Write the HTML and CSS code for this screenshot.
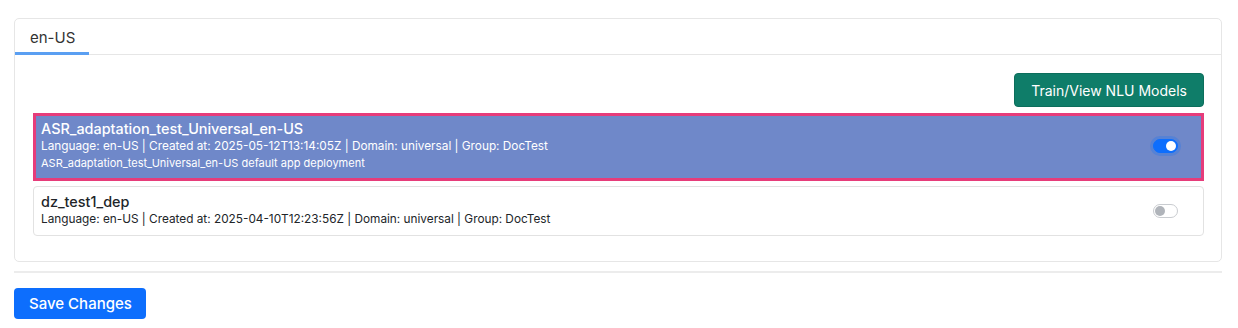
FILE: index.html
```html
<!DOCTYPE html>
<html lang="en">
<head>
    <meta charset="UTF-8">
    <meta name="viewport" content="width=device-width, initial-scale=1.0">
    <title>Deployments</title>
    <link rel="stylesheet" href="styles.css">
</head>
<body>
    <div class="page">
        <div class="lang-card">
            <div class="tabs">
                <div class="tab active">en-US</div>
            </div>
            <div class="tab-body">
                <div class="actions">
                    <button class="nlu-btn">Train/View NLU Models</button>
                </div>
                <div class="deploy-list">
                    <div class="deploy-item selected">
                        <div class="deploy-info">
                            <div class="deploy-name">ASR_adaptation_test_Universal_en-US</div>
                            <div class="deploy-meta">Language: en-US | Created at: 2025-05-12T13:14:05Z | Domain: universal | Group: DocTest</div>
                            <div class="deploy-desc">ASR_adaptation_test_Universal_en-US default app deployment</div>
                        </div>
                        <span class="switch on"></span>
                    </div>
                    <div class="deploy-item">
                        <div class="deploy-info">
                            <div class="deploy-name">dz_test1_dep</div>
                            <div class="deploy-meta">Language: en-US | Created at: 2025-04-10T12:23:56Z | Domain: universal | Group: DocTest</div>
                        </div>
                        <span class="switch"></span>
                    </div>
                </div>
            </div>
        </div>
        <hr class="divider">
        <button class="save-btn">Save Changes</button>
    </div>
</body>
</html>
```

FILE: styles.css
```css
body {
    font-family: "Inter", "Open Sans", sans-serif;
    background-color: #fff;
    color: #212529;
    margin: 0;
}
.page {
    padding: 18px 16px 0 14px;
}
.lang-card {
    border: 1px solid #e6e6e6;
    border-radius: 5px;
}
.tabs {
    display: flex;
    border-bottom: 1px solid #e6e6e6;
    height: 35px;
}
.tab {
    padding: 9px 14px 0 15px;
    font-size: 15px;
    color: #333;
    border-bottom: 3px solid transparent;
    margin-bottom: -1px;
}
.tab.active {
    border-bottom-color: #5a9ff2;
}
.tab-body {
    padding: 18px 17px 25px 18px;
}
.actions {
    display: flex;
    justify-content: flex-end;
    margin-bottom: 6px;
}
.nlu-btn {
    font-family: inherit;
    background-color: #0f7d69;
    color: #fff;
    border: 1px solid #0c6e5c;
    border-radius: 4px;
    font-size: 14px;
    padding: 0 16px;
    height: 34px;
}
.deploy-list {
    display: flex;
    flex-direction: column;
    gap: 5px;
}
.deploy-item {
    display: flex;
    align-items: center;
    justify-content: space-between;
    border: 1px solid #e2e2e2;
    border-radius: 4px;
    padding: 6px 25px 7px 7px;
    color: #212529;
}
.deploy-item.selected {
    background-color: #6f88c9;
    border: 3px solid #e63c7a;
    border-radius: 0;
    padding: 4px 23px 6px 5px;
    color: #fff;
}
.deploy-name {
    font-size: 14.4px;
    font-weight: 500;
    line-height: 18px;
}
.deploy-meta {
    font-size: 11.8px;
    line-height: 17px;
}
.deploy-desc {
    font-size: 11px;
    line-height: 17px;
}
.switch {
    position: relative;
    width: 25px;
    height: 14px;
    border-radius: 8px;
    border: 1px solid #c9ccd0;
    background-color: #fff;
    box-sizing: border-box;
    flex-shrink: 0;
}
.switch::after {
    content: "";
    position: absolute;
    top: 1px;
    left: 1px;
    width: 10px;
    height: 10px;
    border-radius: 50%;
    background-color: #b0b4ba;
}
.switch.on {
    background-color: #0d6efd;
    border-color: #0d6efd;
    box-shadow: 0 0 0 3px rgba(13, 110, 253, 0.25);
}
.switch.on::after {
    left: auto;
    right: 1px;
    background-color: #fff;
}
.divider {
    border: none;
    border-top: 2px solid #ececec;
    margin: 9px 0 15px 0;
}
.save-btn {
    font-family: inherit;
    background-color: #0d6efd;
    color: #fff;
    border: none;
    border-radius: 4px;
    font-size: 15px;
    font-weight: 500;
    height: 31px;
    padding: 0 14px 0 15px;
}
```
